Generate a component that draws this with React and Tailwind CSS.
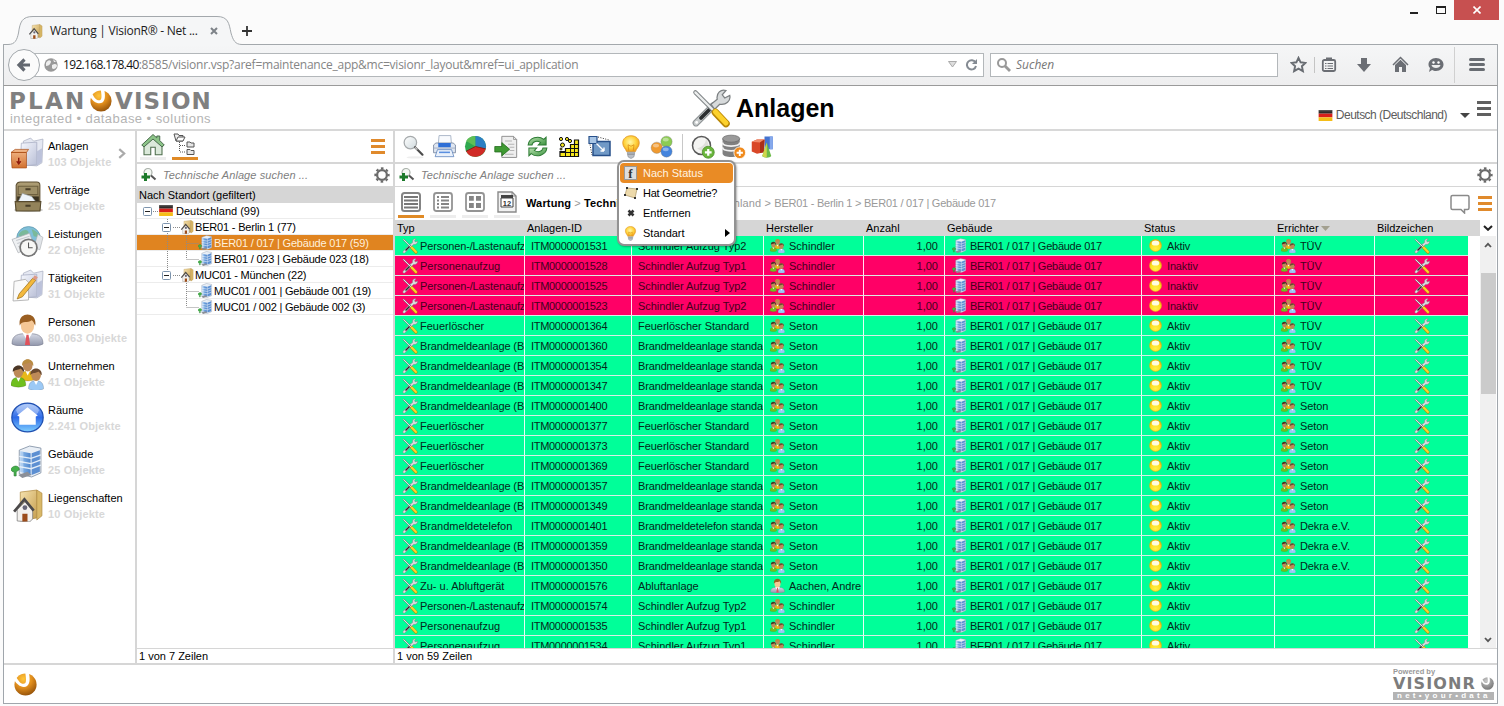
import React from 'react';

const Svg = ({ s = 24, w, h, vb, className = '', children }) => (
  <svg width={w || s} height={h || s} viewBox={vb || '0 0 32 32'} className={'block shrink-0 ' + className}>
    {children}
  </svg>
);

const Defs = () => (
  <svg width="0" height="0" className="absolute">
    <defs>
      <radialGradient id="ball" cx=".4" cy=".25" r=".8"><stop offset="0" stopColor="#ffc53a" /><stop offset=".5" stopColor="#e08d1c" /><stop offset="1" stopColor="#8e4d08" /></radialGradient>
      <radialGradient id="ballGrey" cx=".4" cy=".3" r=".8"><stop offset="0" stopColor="#c9c9c9" /><stop offset="1" stopColor="#6d6d6d" /></radialGradient>
      <radialGradient id="sun" cx=".5" cy=".75" r=".7"><stop offset="0" stopColor="#fff14a" /><stop offset=".6" stopColor="#ffdf1e" /><stop offset="1" stopColor="#e9a400" /></radialGradient>
      <linearGradient id="blueBtn" x1="0" y1="0" x2="0" y2="1"><stop offset="0" stopColor="#8fb4f5" /><stop offset=".5" stopColor="#2f6be8" /><stop offset="1" stopColor="#7fd0ff" /></linearGradient>
      <linearGradient id="folder" x1="0" y1="0" x2="1" y2="1"><stop offset="0" stopColor="#f7f9ff" /><stop offset="1" stopColor="#b9bfd6" /></linearGradient>
      <linearGradient id="tan" x1="0" y1="0" x2="1" y2="1"><stop offset="0" stopColor="#f6e3b0" /><stop offset="1" stopColor="#c59d4c" /></linearGradient>
      <linearGradient id="box" x1="0" y1="0" x2="0" y2="1"><stop offset="0" stopColor="#f2b98c" /><stop offset="1" stopColor="#d2712f" /></linearGradient>
      <linearGradient id="suit" x1="0" y1="0" x2="0" y2="1"><stop offset="0" stopColor="#d6dae6" /><stop offset="1" stopColor="#8d93a8" /></linearGradient>
      <linearGradient id="bld" x1="0" y1="0" x2="1" y2="0"><stop offset="0" stopColor="#8fbdee" /><stop offset="1" stopColor="#4f86cc" /></linearGradient>
      <radialGradient id="bulbG" cx=".45" cy=".4" r=".6"><stop offset="0" stopColor="#fff7a8" /><stop offset=".6" stopColor="#ffd23c" /><stop offset="1" stopColor="#f0a020" /></radialGradient>
      <linearGradient id="greenG" x1="0" y1="0" x2="1" y2="1"><stop offset="0" stopColor="#b6e0ad" /><stop offset="1" stopColor="#3d9440" /></linearGradient>
      <linearGradient id="cab" x1="0" y1="0" x2="0" y2="1"><stop offset="0" stopColor="#b0a077" /><stop offset="1" stopColor="#6d5d3c" /></linearGradient>
      <linearGradient id="lens" x1="0" y1="0" x2="1" y2="1"><stop offset="0" stopColor="#fff" /><stop offset="1" stopColor="#cfd9dd" /></linearGradient>
    </defs>
  </svg>
);

const Tools = ({ s }) => (
  <Svg s={s}>
    <path d="M4 28L18 14" stroke="#8b9092" strokeWidth="5.400" strokeLinecap="round" />
    <path d="M4 28L18 14" stroke="#c5c9ca" strokeWidth="3.800" strokeLinecap="round" />
    <path d="M8 24L16 16" stroke="#2b2e30" strokeWidth="3" strokeLinecap="round" />
    <path d="M16 13L21 9C20 4 24 0.500 28 2L25 5.500L27 8L31 6C32 10 28 14 23 13L19 17Z" fill="#d7dadb" stroke="#7c8082" strokeWidth="1" />
    <circle cx="4.500" cy="27.500" r="1.100" fill="#fff" />
    <path d="M3.500 3.500L18 18" stroke="#7e8385" strokeWidth="3.400" strokeLinecap="round" />
    <path d="M3.500 3.500L18 18" stroke="#eceeee" strokeWidth="1.800" strokeLinecap="round" />
    <path d="M19.500 19.500L28 28.500" stroke="#b98706" strokeWidth="6" strokeLinecap="round" />
    <path d="M19.500 19L28 28" stroke="#fcd12c" strokeWidth="4" strokeLinecap="round" />
  </Svg>
);

const Person = ({ x, y, k, hair, body }) => (
  <g transform={`translate(${x} ${y}) scale(${k})`}>
    <path d="M0 30C0 22 4 19 10 19C16 19 20 22 20 30C15 33 5 33 0 30Z" fill={body} stroke="#00000044" strokeWidth=".8" />
    <path d="M7 19L10 25L13 19Z" fill="#fff" />
    <ellipse cx="10" cy="11.500" rx="6.500" ry="8" fill="#bd8a58" />
    <path d="M2.500 12C1 0 19 0 17.500 12C15 10 15 8 13 7C9 10 5 8 2.500 12Z" fill={hair} />
  </g>
);

const People = ({ s }) => (
  <Svg s={s}>
    <Person x={9} y={0} k={0.72} hair="#b98c42" body="#e8b81a" />
    <Person x={0} y={6} k={0.72} hair="#4a3626" body="#6fbf1e" />
    <Person x={17} y={9} k={0.73} hair="#6b4a30" body="#9cc9f5" />
  </Svg>
);

const Man = ({ s }) => (
  <Svg s={s}>
    <path d="M1 30C1 21 7 20 16 20C25 20 31 21 31 30C27 33 5 33 1 30Z" fill="url(#suit)" stroke="#7d8294" strokeWidth=".7" />
    <path d="M11 19L16 27L21 19Z" fill="#fff" />
    <path d="M15 21H17L18.500 31H13.500Z" fill="#e0525c" />
    <ellipse cx="16" cy="12" rx="6.500" ry="8" fill="#f5c795" />
    <path d="M8.500 12C6-2 26-2 23.500 12C22 10 22 8 20 7C16 10 11 7 8.500 12Z" fill="#9a5f22" />
  </Svg>
);

const Building = ({ s }) => (
  <Svg s={s}>
    <path d="M8 5L18 1L29 3V27L20 31L8 28Z" fill="#e9eff6" stroke="#7e8ea3" strokeWidth=".8" />
    <path d="M9 6L19 8V29L9 26Z" fill="url(#bld)" />
    <path d="M20 8L28 5V26L20 29Z" fill="#5c8fd2" />
    <path d="M8 11L19.500 13L29 9.500M8 16L19.500 18L29 14.500M8 21L19.500 23L29 19.500" stroke="#e2edf9" strokeWidth="1.300" fill="none" />
    <path d="M9 6L12 6.600V27L9 26Z" fill="#ffffff55" />
    <path d="M7 29L16 26L20 29L11 32Z" fill="#8b8f98" />
    <path d="M0 23C3 19 8 20 8 24L5 26L5 30H3V26C1 26 0 25 0 23Z" fill="#44b04a" stroke="#2c7c34" strokeWidth=".6" />
  </Svg>
);

const Estate = ({ s }) => (
  <Svg s={s}>
    <path d="M9 3L25 1V28L9 31Z" fill="url(#tan)" stroke="#b08a42" strokeWidth=".7" />
    <path d="M25 1L30 4V26L25 30Z" fill="#d9b868" stroke="#b08a42" strokeWidth=".7" />
    <path d="M6 20V31L18 32L21 29V20L14 12Z" fill="#f3f1ee" stroke="#777" strokeWidth=".7" />
    <path d="M3 22L13 10L22 21" stroke="#4c4a4a" strokeWidth="2.600" fill="none" />
    <circle cx="13.500" cy="18" r="2.300" fill="#667" />
    <path d="M11 24H16V31.500H11Z" fill="#9c4c1a" />
  </Svg>
);

const FolderBase = () => (
  <g>
    <path d="M12 4L19 1L22 4L31 2L30 25L25 28L12 27Z" fill="#e5e8f2" stroke="#a9aec0" strokeWidth=".7" />
    <path d="M10 6L25 5V27L9 28Z" fill="url(#folder)" stroke="#a5aac0" strokeWidth=".7" />
    <path d="M25 14L30 11V24L25 28Z" fill="#bcc2da" />
  </g>
);

const sideIcons = {
  box: (
    <Svg s={33}>
      <FolderBase />
      <path d="M0 15L4 12H17L15 15V30H1Z" fill="url(#box)" stroke="#a9501b" strokeWidth=".7" />
      <path d="M0 15H15" stroke="#b2561e" /><path d="M5 20H10V26H5Z" fill="#e79a62" />
      <path d="M7.500 20V26M5.500 23.500L7.500 26L9.500 23.500" stroke="#8f1d0d" strokeWidth="1.400" fill="none" />
    </Svg>
  ),
  cabinet: (
    <Svg s={33}>
      <ellipse cx="17" cy="28" rx="14" ry="2" fill="#0003" />
      <path d="M5 4Q6 1 9 1H25Q28 1 28 4V28H5Z" fill="url(#cab)" stroke="#5c4e31" />
      <path d="M7 5H26V13H7Z" fill="#9e8f67" stroke="#6e603f" /><path d="M14 8H19" stroke="#4a3f28" strokeWidth="2" />
      <path d="M6 15H27V20H6Z" fill="#3a3220" />
      <path d="M7 20L11 12L20 15L24 20Z" fill="#eef4fa" stroke="#9ba5b0" strokeWidth=".6" />
      <path d="M4 20H29L28 29H5Z" fill="#93835a" stroke="#574a2d" /><path d="M14 24H19" stroke="#4a3f28" strokeWidth="2" />
    </Svg>
  ),
  clock: (
    <Svg s={33}>
      <circle cx="17" cy="13" r="11.500" fill="#7fbfd8" stroke="#5d97ad" strokeWidth=".7" />
      <path d="M9 7C13 3 18 5 17 8C14 12 10 12 7 10ZM20 4C24 5 27 8 28 12L22 11Z" fill="#7ab99a" />
      <path d="M1 14L18 8L22 19L7 27Z" fill="#eef0f2" stroke="#a9adb3" strokeWidth=".7" />
      <path d="M26 9L31 12L28 24L22 22Z" fill="#e2e5e9" stroke="#a9adb3" strokeWidth=".6" />
      <path d="M5 15L18 11M6 18L19 14M7 21L19 17" stroke="#c5c9ce" />
      <circle cx="17" cy="22" r="9" fill="#777" /><circle cx="17" cy="22" r="7.300" fill="#f7f7f5" />
      <path d="M17 17V22H21" stroke="#555" strokeWidth="1" fill="none" />
    </Svg>
  ),
  pencil: (
    <Svg s={33}>
      <FolderBase />
      <path d="M3 12L14 10L17 13V30L2 31Z" fill="#fafafa" stroke="#aaa" strokeWidth=".8" />
      <path d="M6 29L8 24L21 9L24 11L11 27Z" fill="#f3b93d" stroke="#9a6c12" strokeWidth=".7" /><path d="M21 9L24 11L26 8L23 6Z" fill="#d98" />
    </Svg>
  ),
  man: <Man s={33} />,
  people: <People s={33} />,
  room: (
    <Svg s={33}>
      <ellipse cx="16" cy="16" rx="15.200" ry="14" fill="url(#blueBtn)" stroke="#1f4fb0" strokeWidth="1.200" />
      <ellipse cx="16" cy="9" rx="11" ry="6" fill="#ffffff55" />
      <path d="M16 6L26 14L24 15V23H8V15L6 14Z" fill="#fff" />
    </Svg>
  ),
  building: <Building s={33} />,
  estate: <Estate s={33} />,
};

const sideItems = [
  ['box', 'Anlagen', '103 Objekte'],
  ['cabinet', 'Verträge', '25 Objekte'],
  ['clock', 'Leistungen', '22 Objekte'],
  ['pencil', 'Tätigkeiten', '31 Objekte'],
  ['man', 'Personen', '80.063 Objekte'],
  ['people', 'Unternehmen', '41 Objekte'],
  ['room', 'Räume', '2.241 Objekte'],
  ['building', 'Gebäude', '25 Objekte'],
  ['estate', 'Liegenschaften', '10 Objekte'],
];

const Flag = ({ w = 15, h = 12 }) => (
  <Svg w={w} h={h} vb="0 0 15 12">
    <path d="M0 0H15V4H0Z" fill="#2e2a28" /><path d="M0 4H15V8H0Z" fill="#d8201a" /><path d="M0 8H15V12H0Z" fill="#f5bd18" />
    <path d="M0 0H15V1.500H0Z" fill="#ffffff33" />
  </Svg>
);

const Ball = ({ s, grey }) => (
  <Svg s={s} vb="0 0 22 22">
    <circle cx="11" cy="11" r="10.600" fill={grey ? 'url(#ballGrey)' : 'url(#ball)'} />
    <path d="M0 6.500L2.500 4.500C4.500 7.500 6 10.300 9 10.300C11.800 10.300 12 7.500 10.800 0L14.300 0C16 8.500 14.300 13.300 9.500 13.300C5.500 13.300 2.500 10.500 0 6.500Z" fill="#fff" />
  </Svg>
);

const Burger = ({ c }) => (
  <span className="flex w-[14px] flex-col gap-[3px]">
    {[0, 1, 2].map((i) => <span key={i} className={'h-[3px] w-full ' + c} />)}
  </span>
);

const Gear = () => (
  <Svg s={16} vb="0 0 16 16">
    <circle cx="8" cy="8" r="4.900" fill="none" stroke="#6b6b6b" strokeWidth="2.300" />
    <circle cx="8" cy="8" r="6.700" fill="none" stroke="#6b6b6b" strokeWidth="1.900" strokeDasharray="2.630 2.630" strokeDashoffset="1.300" />
  </Svg>
);

const SearchPlus = () => (
  <Svg s={16} vb="0 0 16 16">
    <circle cx="7" cy="5.500" r="4" fill="#f4f8f4" stroke="#a9b0a9" strokeWidth="1.200" />
    <path d="M10 8.500L14.500 12.500" stroke="#555" strokeWidth="2" />
    <path d="M4.500 6V14M0.500 10H9" stroke="#1c7a2a" strokeWidth="3" />
  </Svg>
);

const SearchRow = ({ line }) => (
  <div className={'flex h-[22px] shrink-0 items-center pl-1 ' + line}>
    <SearchPlus />
    <span className="ml-[6px] flex-1 text-[11px] italic tracking-[0.080px] text-[#808080]">Technische Anlage suchen ...</span>
    <Gear />
  </div>
);

const HomeGreen = () => (
  <Svg s={24}>
    <path d="M4 16L16 5L28 16V29H19V19H13V29H4Z" fill="#dbe9da" stroke="#4e6e4c" strokeWidth="1.400" />
    <path d="M1 16L16 2L21 6.500V4H25V10L31 16L28 18.500L16 8L4 18.500Z" fill="#8cc488" stroke="#47684a" strokeWidth="1.300" />
  </Svg>
);

const TreeIcon = () => (
  <Svg s={24} vb="0 0 24 24">
    <path d="M1 2H5L6 3.500H10V9H3Z" fill="#eee" stroke="#555" /><path d="M3 9L5 5H12L10 9Z" fill="#fff" stroke="#555" />
    <path d="M6.500 10V20M7 13.500H13M7 20H13" stroke="#555" strokeDasharray="1 1" fill="none" />
    <path d="M14 10H17L18 11H21V15H14ZM14 17.500H17L18 18.500H21V22.500H14Z" fill="#e6e6e6" stroke="#555" />
  </Svg>
);

const Bulb = ({ s }) => (
  <Svg s={s}>
    <path d="M10 22C9 18 5 16 5 10.500C5 4.500 10 1 16 1C22 1 27 4.500 27 10.500C27 16 23 18 22 22Z" fill="url(#bulbG)" stroke="#dd9320" strokeWidth="1" />
    <path d="M13 21L12 13L16 15L20 13L19 21" stroke="#d98a12" strokeWidth="1" fill="none" />
    <path d="M11 23H21L20 29L17 31H15L12 29Z" fill="#b9bec6" stroke="#828891" strokeWidth=".8" /><path d="M11.500 25.500H20.500" stroke="#777" />
  </Svg>
);

const toolA = [
  <Svg s={25}>
    <ellipse cx="18" cy="30" rx="11" ry="1.500" fill="#0001" />
    <circle cx="12" cy="11" r="8" fill="url(#lens)" stroke="#a6aaac" strokeWidth="1.600" />
    <path d="M18 17L27.500 26.500" stroke="#4c4c4c" strokeWidth="2.800" strokeLinecap="round" /><path d="M18 17L21 20" stroke="#bbb" strokeWidth="2" />
  </Svg>,
  <Svg s={25}>
    <path d="M9 2H24L25 14H8Z" fill="#f8fafd" stroke="#9aa8bc" />
    <path d="M2 14L5 11.500H27L30 14V24H2Z" fill="#dfe6f1" stroke="#6f7f99" />
    <path d="M8 11.500H24V17H8Z" fill="#2f6fd6" /><path d="M2 18H30" stroke="#93a2ba" /><path d="M7 20H25L28 29H4Z" fill="#eaf1fb" stroke="#5c83bd" /><path d="M9 23.500H23" stroke="#5a8fe0" strokeWidth="2" />
  </Svg>,
  <Svg s={25}>
    <circle cx="16" cy="16" r="13.500" fill="#2fa84f" />
    <path d="M16 16L4 9A13.500 13.500 0 0 1 16 2.500Z" fill="#5fbf57" />
    <path d="M16 16V2.500A13.500 13.500 0 0 1 29 19Z" fill="#2c7fc4" />
    <path d="M16 16L29 19A13.500 13.500 0 0 1 4 22Z" fill="#d02a26" />
    <path d="M4 22L16 16L29 19" stroke="#7d1412" fill="none" />
  </Svg>,
  <Svg s={25}>
    <path d="M10 3H25L29 7V30H10Z" fill="#efefef" stroke="#8c8c8c" strokeWidth="1.200" /><path d="M25 3V7H29" fill="none" stroke="#8c8c8c" />
    <path d="M14 9H23M18 13H26M20 17H26M20 21H26M14 26H25" stroke="#b5b5b5" strokeWidth="1.300" />
    <path d="M1 16H10V11L20 19.500L10 28V23H1Z" fill="#3f9a33" stroke="#226b1c" />
  </Svg>,
  <Svg s={25}>
    <path d="M4 14C5 5 17 1 24 7L27 4V14H17L20 11C16 8 10 9 9 14Z" fill="url(#greenG)" stroke="#2c7a33" strokeWidth="1.300" />
    <path d="M28 18C27 27 15 31 8 25L5 28V18H15L12 21C16 24 22 23 23 18Z" fill="url(#greenG)" stroke="#2c7a33" strokeWidth="1.300" />
  </Svg>,
  <Svg s={22} vb="0 0 22 22">
    <path d="M2 20.500V15.500H7.500V12.500H12.500V8.500H16.500V4H20.500V20.500Z" fill="#f7e71c" stroke="#111" strokeWidth="1.200" />
    <path d="M2 16.500H20.500M8 12.500H20.500M12.500 8.500H20.500M7.500 15V20.500M12.500 12V20.500M16.500 8V20.500" stroke="#111" strokeWidth="1" />
    <g fill="#f7e71c" stroke="#111" strokeWidth="1"><circle cx="3" cy="3" r="1.600" /><circle cx="9" cy="3" r="1.600" /><circle cx="4.500" cy="9" r="2" /><circle cx="12" cy="5" r="1.600" /><circle cx="3" cy="13" r="1" /></g>
  </Svg>,
  <Svg s={23} vb="0 0 23 23">
    <path d="M5 6.500H22V20.500H5Z" fill="#7099c6" stroke="#27508a" strokeWidth="1.500" />
    <path d="M1 1.500H9V8.500H1Z" fill="#a9c6e6" stroke="#27508a" strokeWidth="1.200" />
    <path d="M10 2L21 5M2 9.500L4 20" stroke="#333" strokeDasharray="1 1.500" />
    <path d="M8.500 8.500L16 16M16 16V12.500M16 16H12.500" stroke="#fff" strokeWidth="1.400" fill="none" />
  </Svg>,
  <Bulb s={24} />,
  <Svg s={24}>
    <g stroke="#777" strokeWidth=".5"><circle cx="22" cy="9" r="7.500" fill="#8ccc52" /><circle cx="9" cy="17" r="7.500" fill="#f09a30" /><circle cx="22" cy="22" r="7.500" fill="#4484dd" /></g>
    <g fill="#ffffff66"><ellipse cx="21" cy="6" rx="4" ry="2.500" /><ellipse cx="8" cy="14" rx="4" ry="2.500" /><ellipse cx="21" cy="19" rx="4" ry="2.500" /></g>
  </Svg>,
];

const toolB = [
  <Svg s={24}>
    <circle cx="14" cy="14" r="12" fill="#f4f4f2" stroke="#5a5a5a" strokeWidth="2" />
    <path d="M20 6C24 10 24 18 19 23C14 23 12 19 8 18C14 16 19 13 20 6Z" fill="#e0e0dc" />
    <circle cx="23" cy="23" r="8" fill="#69b53c" stroke="#4c8c28" /><path d="M23 18.500V27.500M18.500 23H27.500" stroke="#fff" strokeWidth="3" />
  </Svg>,
  <Svg s={25}>
    <path d="M2 6V25C2 31 24 31 24 25V6Z" fill="#808080" />
    <path d="M2 11C2 17 24 17 24 11M2 17C2 23 24 23 24 17" stroke="#f2f2f2" strokeWidth="2.200" fill="none" />
    <ellipse cx="13" cy="6" rx="11" ry="4.500" fill="#9a9a9a" stroke="#6d6d6d" />
    <circle cx="24" cy="24" r="7.500" fill="#f08a1c" stroke="#fff" /><path d="M24 20V28M20 24H28" stroke="#fff" strokeWidth="2.400" />
  </Svg>,
  <Svg s={24}>
    <path d="M18 2H29V19H18Z" fill="#4573cf" /><path d="M25 2H29V19H25Z" fill="#86a9ec" />
    <path d="M1 9L8 6H18L17 23L8 25L1 22Z" fill="#d94727" /><path d="M1 9L8 6H18L12 10Z" fill="#f08a6a" /><path d="M12 10L18 6L17 23L12 24Z" fill="#a92e17" />
    <path d="M21 10L27 28C25 31 17 31 15 28Z" fill="#6cba49" /><path d="M21 10L21 30C18 30 16 29 15 28Z" fill="#cfd64c" />
  </Svg>,
];

const viewIcons = [
  <Svg s={22} vb="0 0 22 22"><rect x="2" y="2" width="18" height="18" rx="2.500" fill="#fff" stroke="#848484" strokeWidth="2" /><path d="M4 6H18M4 9.500H18M4 13H18M4 16.500H18" stroke="#777" strokeWidth="1.800" /></Svg>,
  <Svg s={22} vb="0 0 22 22"><rect x="2" y="2" width="18" height="18" rx="2.500" fill="#fff" stroke="#949494" strokeWidth="1.800" /><path d="M5 6H7M9 6H17M5 9.500H7M9 9.500H17M5 13H7M9 13H17M5 16.500H7M9 16.500H17" stroke="#858585" strokeWidth="1.800" /></Svg>,
  <Svg s={22} vb="0 0 22 22"><rect x="2" y="2" width="18" height="18" rx="2.500" fill="#fff" stroke="#949494" strokeWidth="1.800" /><path d="M5 5H9.800V9.800H5ZM12 5H17V9.800H12ZM5 12H9.800V17H5ZM12 12H17V17H12Z" fill="#858585" /></Svg>,
  <Svg s={22} vb="0 0 22 22">
    <path d="M2 1H16L20 5V21H2Z" fill="#f1f1f1" stroke="#8a8a8a" strokeWidth="1.400" /><path d="M16 1V5H20" fill="none" stroke="#8a8a8a" />
    <path d="M5 4H17V7H5Z" fill="#444" /><path d="M5 7H17V16H5Z" fill="#fff" stroke="#444" />
    <text x="11" y="14.500" fontSize="7.500" fontWeight="700" textAnchor="middle" fontFamily="Liberation Sans, sans-serif" fill="#333">12</text>
  </Svg>,
];

const tree = [
  { d: 0, label: 'Deutschland (99)', icon: 'flag' },
  { d: 1, label: 'BER01 - Berlin 1 (77)', icon: 'estate' },
  { d: 2, label: 'BER01 / 017 | Gebäude 017 (59)', icon: 'b', sel: true, v: 'mid', trunk: true },
  { d: 2, label: 'BER01 / 023 | Gebäude 023 (18)', icon: 'b', v: 'end', trunk: true },
  { d: 1, label: 'MUC01 - München (22)', icon: 'estate' },
  { d: 2, label: 'MUC01 / 001 | Gebäude 001 (19)', icon: 'b', v: 'mid' },
  { d: 2, label: 'MUC01 / 002 | Gebäude 002 (3)', icon: 'b', v: 'end' },
];

const TreeLines = ({ r, i }) => {
  const p = { stroke: '#8a8a8a', strokeDasharray: '1 1', fill: 'none' };
  const x = r.d === 0 ? 6 : 25;
  return (
    <Svg w={r.d === 2 ? 66 : r.d === 1 ? 43 : 22} h={16} vb={r.d === 2 ? '0 0 66 16' : r.d === 1 ? '0 0 43 16' : '0 0 22 16'}>
      {r.d === 1 && <path {...p} d={i === 4 ? 'M30.500 0V8M36 8.500H43' : 'M30.500 0V16M36 8.500H43'} />}
      {r.d === 0 && <path {...p} d="M16 8.500H22" />}
      {r.trunk && <path {...p} d="M30.500 0V16" />}
      {r.d === 2 && <path {...p} d={(r.v === 'mid' ? 'M49.500 0V16' : 'M49.500 0V8') + 'M49.500 8.500H62'} />}
      {r.d < 2 && (
        <g>
          <rect x={x + 0.5} y="4.500" width="8" height="8" rx="1" fill="#fff" stroke="#7d94ad" />
          <path d={`M${x + 2} 8.500H${x + 7}`} stroke="#222" />
        </g>
      )}
    </Svg>
  );
};

const A = 'Personen-/Lastenaufz', P = 'Personenaufzug', B = 'Brandmeldeanlage (B', F = 'Feuerlöscher';
const S1 = 'Schindler Aufzug Typ1', S2 = 'Schindler Aufzug Typ2', BS = 'Brandmeldeanlage standa', FS = 'Feuerlöscher Standard';
const rows = [
  [A, 1531, S2, 'Schindler', 1, 'TÜV'],
  [P, 1528, S1, 'Schindler', 0, 'TÜV'],
  [A, 1525, S2, 'Schindler', 0, 'TÜV'],
  [A, 1523, S2, 'Schindler', 0, 'TÜV'],
  [F, 1364, FS, 'Seton', 1, 'TÜV'],
  [B, 1360, BS, 'Seton', 1, 'TÜV'],
  [B, 1354, BS, 'Seton', 1, 'TÜV'],
  [B, 1347, BS, 'Seton', 1, 'TÜV'],
  [B, 1400, BS, 'Seton', 1, 'Seton'],
  [F, 1377, FS, 'Seton', 1, 'Seton'],
  [F, 1373, FS, 'Seton', 1, 'Seton'],
  [F, 1369, FS, 'Seton', 1, 'Seton'],
  [B, 1357, BS, 'Seton', 1, 'Seton'],
  [B, 1349, BS, 'Seton', 1, 'Seton'],
  ['Brandmeldetelefon', 1401, 'Brandmeldetelefon standa', 'Seton', 1, 'Dekra e.V.'],
  [B, 1359, BS, 'Seton', 1, 'Dekra e.V.'],
  [B, 1350, BS, 'Seton', 1, 'Dekra e.V.'],
  ['Zu- u. Abluftgerät', 1576, 'Abluftanlage', 'Aachen, Andre', 1, ''],
  [A, 1574, S2, 'Schindler', 1, ''],
  [P, 1535, S1, 'Schindler', 1, ''],
  [P, 1534, S1, 'Schindler', 1, ''],
];

const cols = 'grid grid-cols-[130px_107px_132px_100px_81px_197px_133px_100px_93px]';
const cell = 'flex items-center overflow-hidden whitespace-nowrap border-r border-white/90';

const StatusDot = () => (
  <Svg s={13} vb="0 0 13 13">
    <circle cx="6.500" cy="6.500" r="6" fill="url(#sun)" stroke="#d9b21e" strokeWidth=".6" />
    <ellipse cx="6.500" cy="4" rx="3.800" ry="2.600" fill="#fffde0" />
  </Svg>
);

const Row = ({ r }) => (
  <div className={`${cols} h-5 w-[1073px] shrink-0 border-b border-[#d8eee4] text-[11px] ${r[4] ? 'bg-[#00ff99] text-[#05281a]' : 'bg-[#ff0066] text-[#45001b]'}`}>
    <div className={cell + ' pl-[7px]'}><Tools s={16} /><span className={'ml-[2px] pt-[2px] ' + (r[0] === B || r[0] === A ? 'tracking-[-0.120px]' : '')}>{r[0]}</span></div>
    <div className={cell + ' pl-[6px] pt-[2px] tracking-[-0.3px]'}>{'ITM000000' + r[1]}</div>
    <div className={cell + ' pl-[6px] pt-[2px] tracking-[-0.04px]'}><span className={r[2].startsWith('Brandmelde') ? 'tracking-[-0.150px]' : ''}>{r[2]}</span></div>
    <div className={cell + ' pl-[6px]'}>{r[3][0] === 'A' ? <Man s={15} /> : <People s={15} />}<span className="ml-[4px] pt-[2px]">{r[3]}</span></div>
    <div className={cell + ' justify-end pr-[6px] pt-[2px]'}>1,00</div>
    <div className={cell + ' pl-[7px]'}><Building s={15} /><span className="ml-[3px] pt-[2px] tracking-[-0.25px]">BER01 / 017 | Gebäude 017</span></div>
    <div className={cell + ' pl-[7px]'}><StatusDot /><span className="ml-[5px] pt-[2px] tracking-[-0.15px]">{r[4] ? 'Aktiv' : 'Inaktiv'}</span></div>
    <div className={cell + ' pl-[6px]'}>{r[5] && <People s={15} />}<span className="ml-[4px] pt-[2px] tracking-[-0.1px]">{r[5]}</span></div>
    <div className="flex items-center justify-center"><Tools s={16} /></div>
  </div>
);

const menu = [
  ['Nach Status', <span className="flex h-[14px] w-[13px] items-center justify-center border border-[#999] bg-[#dedede] font-['Liberation_Serif',serif] text-[13px] font-bold leading-none text-[#333]">f</span>, ''],
  ['Hat Geometrie?', <Svg s={14} vb="0 0 14 14"><path d="M3 2L13 3L11 12L1 9Z" fill="#ecd9ab" stroke="#b5a070" strokeWidth=".8" /><path d="M2 1H4V3H2ZM12 2H14V4H12ZM10 11H12V13H10ZM0 8H2V10H0Z" fill="#333" /></Svg>, 'tracking-[-0.25px]'],
  ['Entfernen', <Svg s={8} vb="0 0 8 8"><path d="M1.500 1.500L6.500 6.500M6.500 1.500L1.500 6.500" stroke="#333" strokeWidth="2.600" /></Svg>, ''],
  ['Standart', <Bulb s={15} />, ''],
];

const Menu = () => (
  <div className="absolute left-[222px] top-[29px] z-10 w-[119px] rounded-[7px] border-2 border-[#929292] bg-white p-px shadow-[1px_1px_2px_rgba(0,0,0,0.3)]">
    {menu.map(([t, icon, tr], i) => (
      <div key={t} className={'flex h-5 items-center rounded-[4px] pl-[3px] pr-[3px] text-[11px] ' + (i === 0 ? 'bg-[#e98b25] text-[#fff3e0]' : 'text-black')}>
        <span className="flex w-[15px] justify-center">{icon}</span>
        <span className={'ml-[5px] flex-1 whitespace-nowrap ' + tr}>{t}</span>
        {i === 3 && <Svg w={5} h={8} vb="0 0 5 8"><path d="M0 0L5 4L0 8Z" fill="#000" /></Svg>}
      </div>
    ))}
  </div>
);

const Chrome = () => (
  <>
    <div className="relative z-10 flex h-[44px] shrink-0 pl-[28px] font-['Open_Sans','Noto_Sans',sans-serif]">
      <svg width="1504" height="46" className="absolute left-0 top-0">
        <path d="M3.500 46V44.500H8C15 44.500 17 40 18.500 33C20 22 22 16.500 33 16.500H217C228 16.500 229 23 231 33C233 40 235 44.500 242 44.500H1497.500V46" fill="#f5f6f7" stroke="#a3a8ac" />
      </svg>
      <div className="relative mt-[18px] flex h-[26px] w-[190px] items-center text-[12px] text-[#1c1c1c]">
        <Estate s={15} />
        <span className="ml-[7px] whitespace-nowrap tracking-[-0.25px]">Wartung | VisionR® - Net ...</span>
        <Svg s={8} vb="0 0 8 8" className="ml-auto"><path d="M1 1L7 7M7 1L1 7" stroke="#7d8288" strokeWidth="2" /></Svg>
      </div>
      <Svg s={10} vb="0 0 10 10" className="relative ml-[24px] mt-[26px]"><path d="M5 0V10M0 5H10" stroke="#333" strokeWidth="1.800" /></Svg>
      <div className="relative ml-auto flex h-5 items-start pr-[5px]">
        <span className="mt-[12px] h-[2px] w-[8px] bg-[#222]" />
        <span className="ml-[18px] mt-[6px] h-[8px] w-[10px] border border-t-2 border-[#222]" />
        <span className="ml-[8px] flex h-[20px] w-[45px] items-center justify-center bg-[#c75050]">
          <Svg s={8} vb="0 0 8 8"><path d="M.5 .5L7.500 7.500M7.500 .5L.5 7.500" stroke="#fff" strokeWidth="1.600" /></Svg>
        </span>
      </div>
    </div>
    <div className="relative ml-[3px] flex h-[42px] w-[1495px] shrink-0 items-center border-x border-b border-[#a3a8ac] border-b-[#9a9a9a] bg-gradient-to-b from-[#f5f6f7] to-[#eeeeef] pl-[4px] font-['Open_Sans','Noto_Sans',sans-serif] text-[12px]">
      <span className="relative z-10 flex h-[32px] w-[32px] shrink-0 items-center justify-center rounded-full border border-[#a3a8ac] bg-[#fbfbfb]">
        <Svg s={16} vb="0 0 16 16"><path d="M14 8H4M8.500 2.500L3 8L8.500 13.500" stroke="#636870" strokeWidth="3.200" fill="none" /></Svg>
      </span>
      <span className="-ml-[6px] flex h-[24px] w-[950px] items-center border border-[#b3b7ba] bg-white pl-[9px] pr-[5px]">
        <Svg s={14} vb="0 0 14 14"><circle cx="7" cy="7" r="6.700" fill="#999" /><path d="M2 5C4 1 7 2 7 4C6 7 4 8 2 8ZM8 7C11 5 13 6 13 8C12 11 9 12 8 10ZM9 1L12 4L10 4Z" fill="#eee" /></Svg>
        <span className="ml-[5px] whitespace-nowrap tracking-[-0.240px] text-[#858585]"><span className="tracking-[-0.66px] text-[#111]">192.168.178.40</span>:8585/visionr.vsp?aref=maintenance_app&amp;mc=visionr_layout&amp;mref=ui_application</span>
        <Svg w={9} h={7} vb="0 0 9 7" className="ml-auto"><path d="M.5 .5H8.500L4.500 6Z" fill="#ddd" stroke="#aaa" /></Svg>
        <Svg s={13} vb="0 0 13 13" className="ml-[8px]"><path d="M10.500 4.500A4.600 4.600 0 1 0 11 8" fill="none" stroke="#858b93" strokeWidth="2" /><path d="M12 1V6H7Z" fill="#858b93" /></Svg>
      </span>
      <span className="ml-[6px] flex h-[24px] w-[288px] items-center border border-[#b3b7ba] bg-white pl-[6px]">
        <Svg s={14} vb="0 0 14 14"><circle cx="5" cy="5" r="4" fill="none" stroke="#999" strokeWidth="2" /><path d="M8 8L13 13" stroke="#999" strokeWidth="2.800" /></Svg>
        <span className="ml-[5px] italic text-[#777]">Suchen</span>
      </span>
      <Svg s={17} vb="0 0 17 17" className="ml-[12px]"><path d="M8.500 1.800L10.600 6.300L15.500 6.900L11.900 10.200L12.900 15.200L8.500 12.700L4.100 15.200L5.100 10.200L1.500 6.900L6.400 6.300Z" fill="none" stroke="#686c72" strokeWidth="1.900" /></Svg>
      <span className="ml-[7px] h-4 w-px bg-[#c4c4c4]" />
      <Svg s={16} vb="0 0 16 16" className="ml-[6px]"><rect x="1.800" y="3" width="12.400" height="11" rx="1.500" fill="none" stroke="#6b6e74" strokeWidth="1.800" /><path d="M5 0.500H11V3.500H5Z" fill="#6b6e74" /><path d="M4 6.500H5.500M6.500 6.500H12M4 9H5.500M6.500 9H12M4 11.500H5.500M6.500 11.500H12" stroke="#6b6e74" strokeWidth="1.200" /></Svg>
      <Svg s={16} vb="0 0 16 16" className="ml-[19px]"><path d="M5 1H11V7H15L8 15L1 7H5Z" fill="#6b6e74" /></Svg>
      <Svg s={17} vb="0 0 17 17" className="ml-[20px]"><path d="M1 9L8.500 1.500L16 9" fill="none" stroke="#6b6e74" strokeWidth="1.500" /><path d="M3 9L8.500 3.800L14 9V16H10V11H7V16H3Z" fill="#6b6e74" /></Svg>
      <Svg s={16} vb="0 0 16 16" className="ml-[19px]"><path d="M8 1C12.500 1 15.500 4 15.500 7.500C15.500 11 12.500 14 8 14C6.500 14 5 13.500 4 13L1 15L2 11C1 10 .5 9 .5 7.500C.5 4 3.500 1 8 1Z" fill="#6b6e74" /><circle cx="5.500" cy="5.500" r="1.200" fill="#fff" /><circle cx="10.500" cy="5.500" r="1.200" fill="#fff" /><path d="M3.500 8H12.500C12 12 4 12 3.500 8Z" fill="#eee" /></Svg>
      <span className="ml-[10px] h-9 w-px bg-[#d0d0d0]" />
      <span className="ml-[14px] flex w-[16px] flex-col gap-[2px]">
        {[0, 1, 2].map((i) => <span key={i} className="h-[3px] rounded-full bg-[#686c72]" />)}
      </span>
    </div>
  </>
);

export default function App() {
  return (
    <div className="flex h-[706px] w-[1504px] flex-col overflow-hidden bg-[#fbfbfb] font-['Liberation_Sans',Arial,sans-serif] leading-none">
      <Defs />
      <Chrome />
      <div className="ml-[3px] flex h-[618px] w-[1495px] flex-col border-x border-b border-[#a0a6ac] bg-white">
        <header className="relative flex h-[45px] shrink-0 items-start justify-between border-b-2 border-[#d8d8d8]">
          <div className="pl-[5px] pt-[3px]">
            <div className="flex h-[23px] items-center font-['DejaVu_Sans',sans-serif] text-[23px] font-bold leading-[22px] text-[#808080]">
              <span className="w-[81px] tracking-[2.200px]">PLAN</span>
              <Ball s={22} />
              <span className="ml-[3px] tracking-[1.100px]">VISION</span>
            </div>
            <div className="ml-px whitespace-nowrap text-[13px] leading-[13px] tracking-[0.45px] text-[#b4b4b4]">integrated • database • solutions</div>
          </div>
          <div className="absolute left-[687px] top-[2px] flex items-center">
            <Tools s={40} />
            <span className="ml-[5px] text-[25px] font-bold text-black">Anlagen</span>
          </div>
          <div className="flex items-start pr-[6px] pt-[15px]">
            <div className="flex items-center pt-[8px]">
              <Flag w={15} h={11} />
              <span className="ml-[3px] whitespace-nowrap text-[12px] tracking-[-0.520px] text-[#5c5c5c]">Deutsch (Deutschland)</span>
              <Svg w={10} h={5} vb="0 0 10 5" className="ml-[13px]"><path d="M0 0H10L5 5Z" fill="#444" /></Svg>
            </div>
            <span className="ml-[7px]"><Burger c="bg-[#606060]" /></span>
          </div>
        </header>
        <div className="flex h-[532px] shrink-0">
          <nav className="flex w-[131px] shrink-0 flex-col pl-[7px] pt-[6px]">
            {sideItems.map(([ic, a, b], i) => (
              <div key={a} className="flex h-[44px] items-start">
                {sideIcons[ic]}
                <div className="ml-[4px] flex flex-1 flex-col gap-[5px] whitespace-nowrap pt-[4px] text-[11px]">
                  <span className="text-black">{a}</span>
                  <span className="font-bold tracking-[0.150px] text-[#d8d8d8]">{b}</span>
                </div>
                {i === 0 && <Svg w={8} h={11} vb="0 0 7 10" className="mr-[9px] mt-[11px]"><path d="M1 1L5.500 5L1 9" fill="none" stroke="#aaa" strokeWidth="2" /></Svg>}
              </div>
            ))}
          </nav>
          <section className="flex w-[260px] shrink-0 flex-col border-x-2 border-[#d6d6d6]">
            <div className="flex h-[33px] shrink-0 items-start border-b-2 border-[#d6d6d6] pl-[3px] pr-[8px]">
              <span className="flex h-[29px] w-[26px] flex-col items-center border-b-[3px] border-[#ededed] pt-[2px]"><HomeGreen /></span>
              <span className="ml-[6px] flex h-[29px] w-[26px] flex-col items-center border-b-[3px] border-[#e08a25] pt-[1px]"><TreeIcon /></span>
              <span className="ml-auto mt-[8px]"><Burger c="bg-[#e08a2c]" /></span>
            </div>
            <SearchRow line="pr-[3px]" />
            <div className="h-[17px] shrink-0 bg-[#d6d6d6] pl-[2px] text-[11px] leading-[18px]">Nach Standort (gefiltert)</div>
            {tree.map((r, i) => (
              <div key={r.label} className={'flex h-4 shrink-0 items-center border-b border-[#ececec] text-[11px] ' + (r.sel ? 'bg-[#e08420] text-[#fff0dc]' : 'text-black')}>
                <TreeLines r={r} i={i} />
                {r.icon === 'flag' ? <Flag w={14} h={11} /> : r.icon === 'b' ? <span className="-ml-[5px]"><Building s={15} /></span> : <Estate s={14} />}
                <span className={'whitespace-nowrap pt-[2px] ' + (r.d === 0 ? 'ml-[3px]' : r.d === 1 ? 'ml-[1px] tracking-[-0.18px]' : 'ml-[1px] tracking-[-0.2px]')}>{r.label}</span>
              </div>
            ))}
            <div className="mt-auto h-[15px] border-t border-[#d6d6d6] pl-[2px] pt-[2px] text-[11px]">1 von 7 Zeilen</div>
          </section>
          <main className="relative flex w-[1102px] shrink-0 flex-col">
            <div className="flex h-[33px] shrink-0 items-center border-b-2 border-[#d6d6d6] pl-[3px]">
              {toolA.map((t, i) => <span key={i} className="flex w-[31px] justify-center">{t}</span>)}
              <span className="ml-[5px] mr-[5px] h-[26px] w-px bg-[#c8c8c8]" />
              {toolB.map((t, i) => <span key={i} className="flex w-[30px] justify-center">{t}</span>)}
            </div>
            <Menu />
            <SearchRow line="!h-[23px] border-b border-[#d6d6d6] pr-[4px]" />
            <div className="flex h-[33px] shrink-0 items-center gap-[6px] pl-[3px] pr-[5px]">
              {viewIcons.map((v, i) => (
                <span key={i} className={'mt-[4px] flex h-[27px] w-[26px] justify-center self-start border-b-[3px] ' + (i === 0 ? 'border-[#e08a25]' : 'border-[#ededed]')}>{v}</span>
              ))}
              <span className="whitespace-nowrap text-[11px] tracking-[-0.25px] text-[#999]">
                <b className="tracking-[0.150px] text-black">Wartung</b><span className="tracking-[0.05px]"> &gt; </span><b className="tracking-[0.150px] text-black">Technische Anlage</b><span className="tracking-[0.150px]"> &gt; Deutschland &gt; </span><span>BER01 - Berlin 1 &gt; BER01 / 017 | Gebäude 017</span>
              </span>
              <Svg w={20} h={20} vb="0 0 20 20" className="ml-auto"><path d="M2.500 1.500H17.500Q19 1.500 19 3V14Q19 15.500 17.500 15.500H14.500V19L11 15.500H2.500Q1 15.500 1 14V3Q1 1.500 2.500 1.500Z" fill="#fff" stroke="#8a8a8a" strokeWidth="1.500" /></Svg>
              <span className="ml-[2px]"><Burger c="bg-[#e08a2c]" /></span>
            </div>
            <div className="flex h-[16px] shrink-0">
              <div className={cols + ' w-[1085px] items-center bg-[#d6d6d6] pl-[2px] text-[11px]'}>
                <span>Typ</span><span>Anlagen-ID</span><span /><span>Hersteller</span><span>Anzahl</span><span>Gebäude</span><span>Status</span>
                <span className="flex items-center">Errichter<Svg w={9} h={5} vb="0 0 9 5" className="ml-[2px]"><path d="M0 0H9L4.500 5Z" fill="#a3a090" /></Svg></span>
                <span>Bildzeichen</span>
              </div>
              <span className="flex w-[16px] items-center justify-center"><Svg w={10} h={6} vb="0 0 10 6"><path d="M1 1L5 4.800L9 1" fill="none" stroke="#222" strokeWidth="2" /></Svg></span>
            </div>
            <div className="flex h-[412px] shrink-0">
              <div className="flex h-[412px] w-[1085px] flex-col overflow-hidden">
                {rows.map((r) => <Row key={r[1]} r={r} />)}
              </div>
              <div className="flex w-[16px] flex-col items-center bg-[#f0f0f0]">
                <Svg w={8} h={6} vb="0 0 8 6" className="mt-[6px]"><path d="M1 5L4 1.800L7 5" fill="none" stroke="#555" strokeWidth="1.800" /></Svg>
                <span className="mt-[25px] h-[121px] w-[15px] bg-[#cbcbcb]" />
                <Svg w={8} h={6} vb="0 0 8 6" className="mb-[5px] mt-auto"><path d="M1 1L4 4.200L7 1" fill="none" stroke="#555" strokeWidth="1.800" /></Svg>
              </div>
            </div>
            <div className="h-[15px] border-t border-[#d6d6d6] pl-[2px] pt-[2px] text-[11px]">1 von 59 Zeilen</div>
          </main>
        </div>
        <footer className="flex flex-1 items-start justify-between border-t-2 border-[#d6d6d6] pl-[10px] pr-[3px]">
          <span className="mt-[8px]"><Ball s={23} /></span>
          <div className="mt-[3px] flex w-[101px] flex-col">
            <span className="text-[7.500px] font-bold text-[#999]">Powered by</span>
            <div className="flex h-[16px] items-center justify-between font-['DejaVu_Sans',sans-serif] text-[16px] font-bold leading-[15px] tracking-[1.100px] text-[#7c7c7c]">VISIONR<Ball s={13} grey /></div>
            <span className="h-[8px] overflow-hidden whitespace-nowrap bg-[#b4b4b4] pl-[4px] text-[8px] font-bold leading-[8px] tracking-[3.250px] text-white">net•your•data</span>
          </div>
        </footer>
      </div>
    </div>
  );
}
